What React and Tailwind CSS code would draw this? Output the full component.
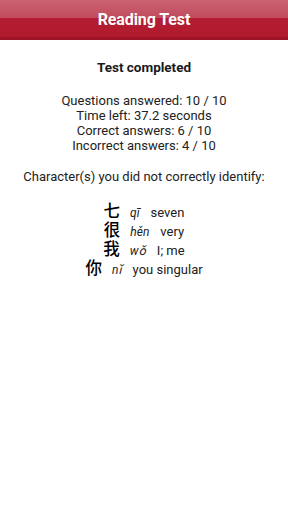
export default function App() {
  const misses = [
    { hanzi: '七', pinyin: 'qī', meaning: 'seven' },
    { hanzi: '很', pinyin: 'hěn', meaning: 'very' },
    { hanzi: '我', pinyin: 'wǒ', meaning: 'I; me' },
    { hanzi: '你', pinyin: 'nǐ', meaning: 'you singular' },
  ];

  return (
    <div
      className="w-[288px] h-[512px] bg-white text-[#1a1a1a] overflow-hidden"
      style={{ fontFamily: 'Roboto, "Noto Sans CJK SC", sans-serif' }}
    >
      {/* Title bar */}
      <div className="h-[40px] flex flex-col">
        <div className="flex-1 flex items-center justify-center pt-[2px] bg-[linear-gradient(to_bottom,#ca6272_0%,#c04b5c_50%,#b41d31_50%,#b21a2e_100%)]">
          <span className="text-white font-bold text-[16px] tracking-[-0.1px]">Reading Test</span>
        </div>
        <div className="h-[3px] bg-[#9c1426]" />
      </div>

      {/* Results */}
      <div className="flex flex-col items-center text-center">
        <h1 className="mt-[18px] font-bold text-[13.5px] leading-[18px]">Test completed</h1>

        <div className="mt-[17px] text-[13px] leading-[15px] text-[#222]">
          <p>Questions answered: 10 / 10</p>
          <p>Time left: 37.2 seconds</p>
          <p>Correct answers: 6 / 10</p>
          <p>Incorrect answers: 4 / 10</p>
        </div>

        <p className="mt-[16px] text-[13px] leading-[15px] text-[#222]">
          Character(s) you did not correctly identify:
        </p>

        <div className="mt-[18px] flex flex-col items-center">
          {misses.map((m) => (
            <div key={m.hanzi} className="flex items-baseline h-[19px] leading-[19px]">
              <span className="text-[16.5px] font-medium text-black">{m.hanzi}</span>
              <span className="ml-[10px] italic text-[12px] text-[#222]">{m.pinyin}</span>
              <span className="ml-[11px] text-[13px] text-[#222]">{m.meaning}</span>
            </div>
          ))}
        </div>
      </div>
    </div>
  );
}
